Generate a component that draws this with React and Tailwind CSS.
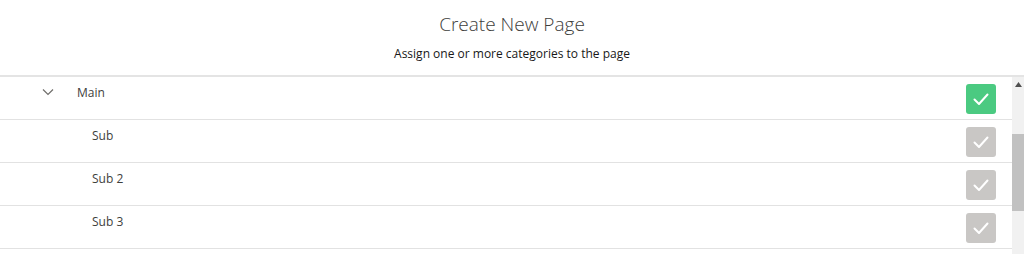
import React from 'react';

const rows = [
  { label: 'Main', level: 0, checked: true },
  { label: 'Sub', level: 1, checked: false },
  { label: 'Sub 2', level: 1, checked: false },
  { label: 'Sub 3', level: 1, checked: false },
];

const Check = ({ checked }) => (
  <div
    className={`w-[30px] h-[30px] rounded-[3px] flex items-center justify-center ${
      checked ? 'bg-[#4bca81]' : 'bg-[#c9c7c5]'
    }`}
  >
    <svg width="18" height="18" viewBox="0 0 18 18" fill="none">
      <polyline points="2.5,9.5 7,14 15.5,4.5" stroke="white" strokeWidth="2" strokeLinecap="round" strokeLinejoin="round" />
    </svg>
  </div>
);

export default function App() {
  return (
    <div className="w-[1024px] h-[254px] bg-white overflow-hidden flex flex-col" style={{ fontFamily: '"Open Sans", "Noto Sans", sans-serif' }}>
      {/* Header */}
      <div className="h-[77px] shrink-0 flex flex-col items-center pt-[11px] border-b-2 border-[#e4e4e4]">
        <h1 className="text-[19px] leading-[26px] font-light text-[#3e3e3c]">Create New Page</h1>
        <p className="mt-[8px] text-[12px] leading-[18px] text-[#181818]">Assign one or more categories to the page</p>
      </div>

      {/* List + scrollbar */}
      <div className="flex flex-1 min-h-0">
        <div className="flex-1">
          {rows.map((row) => (
            <div key={row.label} className="h-[43px] flex border-b border-[#e2e2e2]">
              <div className="flex-1 flex pt-[6px]">
                {row.level === 0 ? (
                  <div className="flex items-start">
                    <svg className="ml-[42px] mt-[5px]" width="12" height="8" viewBox="0 0 12 8" fill="none">
                      <polyline points="1,1.5 6,6.5 11,1.5" stroke="#706e6b" strokeWidth="1.2" />
                    </svg>
                    <span className="ml-[23px] text-[12px] leading-[20px] text-[#3e3e3c]">{row.label}</span>
                  </div>
                ) : (
                  <span className="ml-[92px] text-[12px] leading-[20px] text-[#3e3e3c]">{row.label}</span>
                )}
              </div>
              <div className="w-[46px] flex items-center pt-[2px]">
                <Check checked={row.checked} />
              </div>
            </div>
          ))}
        </div>
        <div className="w-[12px] bg-[#f1f1f1] flex flex-col items-center">
          <svg className="mt-[5px]" width="7" height="5" viewBox="0 0 7 5">
            <polygon points="0,5 3.5,0 7,5" fill="#505050" />
          </svg>
          <div className="mt-[47px] w-full h-[77px] bg-[#c1c1c1]" />
        </div>
      </div>
    </div>
  );
}
